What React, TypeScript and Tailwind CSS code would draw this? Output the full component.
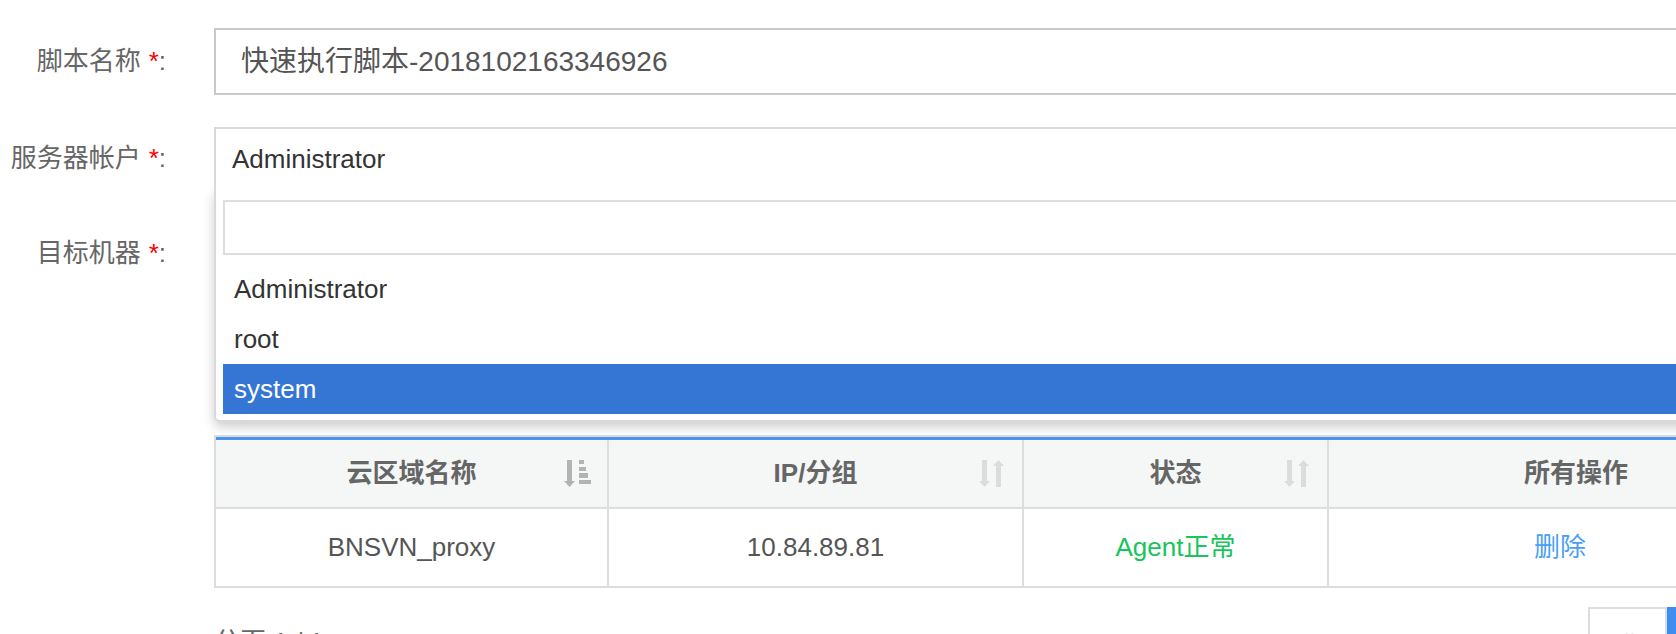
const font = { fontFamily: '"Liberation Sans", "Noto Sans CJK SC", Arial, sans-serif' };

const SortActive = () => (
  <svg width="28" height="28" viewBox="0 0 28 28" fill="#b3b3b3">
    <rect x="3" y="0" width="5" height="21" />
    <polygon points="0,21 11,21 5.5,27" />
    <rect x="15" y="0" width="5" height="4" />
    <rect x="15" y="7" width="7" height="4" />
    <rect x="15" y="13" width="9" height="5" />
    <rect x="15" y="20" width="12" height="4" />
  </svg>
);

const SortBoth = () => (
  <svg width="28" height="28" viewBox="0 0 28 28" fill="#dcdcdc">
    <rect x="3" y="0" width="5" height="21" />
    <polygon points="0,21 11,21 5.5,27" />
    <polygon points="14,6 25,6 19.5,0" />
    <rect x="17" y="6" width="5" height="21" />
  </svg>
);

const Label = ({ text, h }: { text: string; h: string }) => (
  <div className={`w-[166px] shrink-0 flex items-center justify-end text-[26px] text-[#666] ${h}`}>
    {text}
    <span className="ml-[8px] text-[#f00]">*</span>
    <span>:</span>
  </div>
);

const HeadCell = ({ title, icon, last }: { title: string; icon?: "active" | "both"; last?: boolean }) => (
  <div className={`grid grid-cols-[1fr_auto_1fr] items-center h-[67px] ${last ? "" : "border-r-2 border-[#dddddd]"}`}>
    <div />
    <div className="font-bold text-[26px] text-[#666]">{title}</div>
    <div className="flex justify-end pr-[15px]">
      {icon === "active" && <SortActive />}
      {icon === "both" && <SortBoth />}
    </div>
  </div>
);

const Cell = ({ children, className = "", last }: { children: React.ReactNode; className?: string; last?: boolean }) => (
  <div className={`flex items-center justify-center h-[77px] text-[26px] ${last ? "" : "border-r-2 border-[#dddddd]"} ${className}`}>
    {children}
  </div>
);

export default function App() {
  return (
    <div className="w-[1676px] h-[634px] overflow-hidden bg-white" style={font}>
      <div className="pt-[28px]">
        <div className="flex">
          <Label text="脚本名称" h="h-[67px]" />
          <div className="ml-[48px] w-[1611px] shrink-0 h-[67px] border-2 border-[#c9c9c9] flex items-center pl-[25px] text-[28px] text-[#555]">
            快速执行脚本-2018102163346926
          </div>
        </div>

        <div className="flex mt-[32px] relative z-10">
          <Label text="服务器帐户" h="h-[63px]" />
          <div className="ml-[48px] w-[1611px] shrink-0 relative">
            {/* select header sits over the dropdown so its shadow doesn't show on top */}
            <div className="relative z-20 bg-white h-[63px] border-t-2 border-x-2 border-[#d9d9d9] flex items-center pl-[16px] text-[26px] text-[#333]">
              Administrator
            </div>
            <div className="absolute z-10 left-0 right-0 top-[63px] bg-white border-x-2 border-b-2 border-[#d9d9d9] rounded-b-[6px] shadow-[0_5px_12px_rgba(0,0,0,0.2)] px-[7px] pt-[10px] pb-[6px]">
              <div className="h-[55px] border-2 border-[#dddddd]" />
              <div className="mt-[9px] text-[26px] text-[#333]">
                <div className="h-[50px] flex items-center pl-[11px]">Administrator</div>
                <div className="h-[50px] flex items-center pl-[11px]">root</div>
                <div className="h-[50px] flex items-center pl-[11px] bg-[#3575d4] text-white">system</div>
              </div>
            </div>
          </div>
        </div>

        <div className="flex mt-[32px]">
          <Label text="目标机器" h="h-[62px]" />
          <div className="ml-[48px] w-[1611px] shrink-0 pt-[213px]">
            <div className="border-2 border-[#dddddd]">
              <div className="grid grid-cols-[393px_415px_305px_1fr] bg-[#f5f7f7] border-t-[3px] border-t-[#4a94ef] border-b-2 border-b-[#dddddd]">
                <HeadCell title="云区域名称" icon="active" />
                <HeadCell title="IP/分组" icon="both" />
                <HeadCell title="状态" icon="both" />
                <HeadCell title="所有操作" last />
              </div>
              <div className="grid grid-cols-[393px_415px_305px_1fr]">
                <Cell className="text-[#555]">BNSVN_proxy</Cell>
                <Cell className="text-[#555]">10.84.89.81</Cell>
                <Cell className="text-[#19c45c]">Agent正常</Cell>
                <Cell className="text-[#4a9ff5]" last>
                  <span className="mr-[32px]">删除</span>
                </Cell>
              </div>
            </div>

            <div className="mt-[19px] flex items-center justify-between">
              <div className="h-[60px] flex items-center text-[26px] text-[#666] pt-[10px]">分页 1 / 1</div>
              <div className="flex">
                <div className="w-[79px] h-[60px] border-2 border-[#dddddd] flex items-center justify-center text-[26px] text-[#999]">
                  &laquo;
                </div>
                <div className="w-[79px] h-[60px] bg-[#3d8ef0] border-2 border-[#3d8ef0] flex items-center justify-center text-[26px] text-white">
                  1
                </div>
                <div className="w-[79px] h-[60px] border-2 border-[#dddddd] flex items-center justify-center text-[26px] text-[#999]">
                  &raquo;
                </div>
              </div>
            </div>
          </div>
        </div>
      </div>
    </div>
  );
}
